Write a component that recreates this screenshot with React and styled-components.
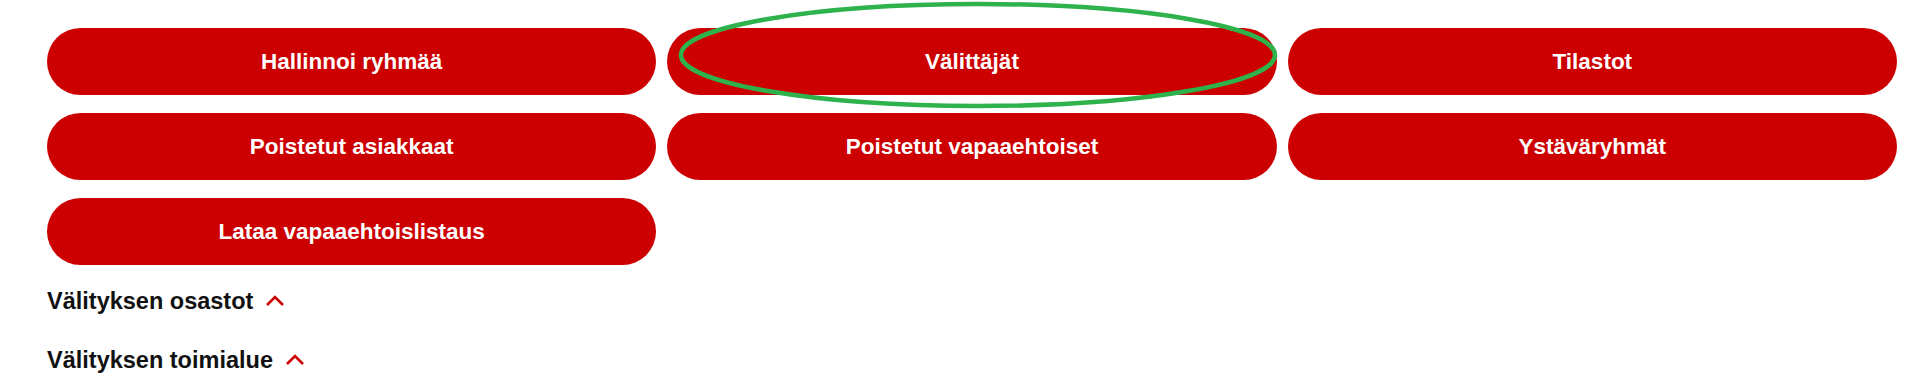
import React from "react"
import styled, { createGlobalStyle } from "styled-components"

const RED = "#cc0000"

const GlobalStyle = createGlobalStyle`
  html, body {
    margin: 0;
    padding: 0;
    background: #ffffff;
    font-family: "Liberation Sans", Arial, sans-serif;
  }
`

const Page = styled.div`
  position: relative;
  width: 1920px;
  height: 386px;
  box-sizing: border-box;
  padding: 28px 23px 0 47px;
  overflow: hidden;
`

const ButtonGrid = styled.div`
  display: grid;
  grid-template-columns: repeat(3, 1fr);
  column-gap: 11px;
  row-gap: 18px;
`

const ActionButton = styled.button`
  height: 67px;
  border: none;
  border-radius: 34px;
  background: ${RED};
  color: #ffffff;
  font-family: "Liberation Sans", Arial, sans-serif;
  font-weight: 700;
  font-size: 22.5px;
  cursor: pointer;
  padding: 0 20px;
`

const Sections = styled.div`
  display: flex;
  flex-direction: column;
  gap: 31px;
  padding-top: 22px;
`

const SectionToggle = styled.div`
  display: flex;
  align-items: center;
  gap: 12px;
  font-size: 23.5px;
  font-weight: 700;
  color: #111111;
  line-height: 28px;
`

const Highlight = styled.svg`
  position: absolute;
  left: 676px;
  top: 0;
  pointer-events: none;
`

const Chevron = () => (
  <svg width="20" height="14" viewBox="0 0 20 14">
    <path d="M2 11 L10 3 L18 11" fill="none" stroke={RED} strokeWidth="2.6" />
  </svg>
)

const buttons = [
  "Hallinnoi ryhmää",
  "Välittäjät",
  "Tilastot",
  "Poistetut asiakkaat",
  "Poistetut vapaaehtoiset",
  "Ystäväryhmät",
  "Lataa vapaaehtoislistaus",
]

const App = () => {
  return (
    <Page>
      <GlobalStyle />
      <ButtonGrid>
        {buttons.map(label => (
          <ActionButton key={label}>{label}</ActionButton>
        ))}
      </ButtonGrid>
      <Sections>
        <SectionToggle>
          Välityksen osastot <Chevron />
        </SectionToggle>
        <SectionToggle>
          Välityksen toimialue <Chevron />
        </SectionToggle>
      </Sections>
      <Highlight width="610" height="110" viewBox="0 0 610 110">
        <ellipse
          cx="302"
          cy="55"
          rx="297"
          ry="51"
          fill="none"
          stroke="#2eb24c"
          strokeWidth="4.5"
        />
      </Highlight>
    </Page>
  )
}

export default App
